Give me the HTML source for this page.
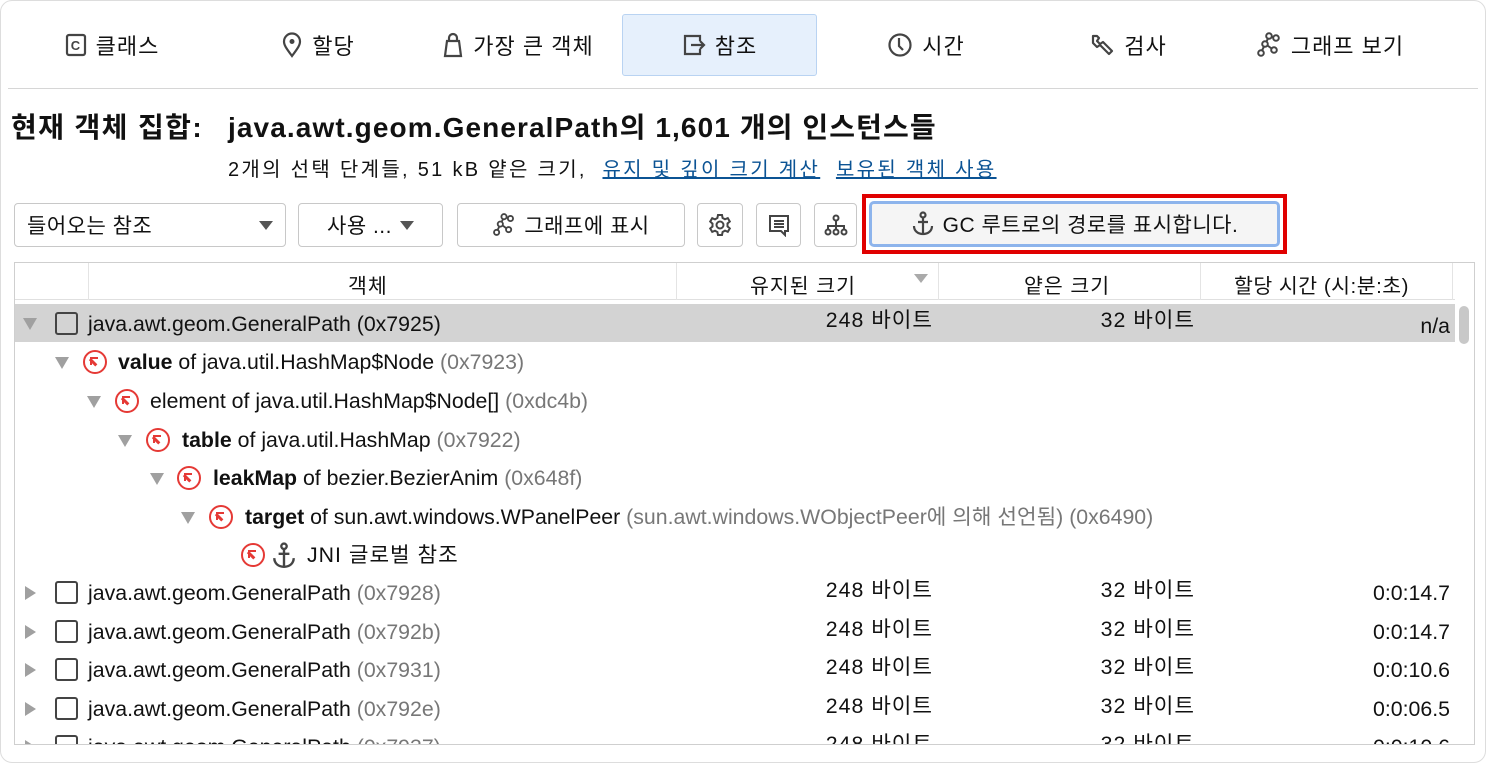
<!DOCTYPE html>
<html><head><meta charset="utf-8"><style>
*{box-sizing:border-box;margin:0;padding:0}
body{width:1486px;height:763px;background:#fff;font-family:"Liberation Sans","Noto Sans CJK KR",sans-serif;color:#111;position:relative;overflow:hidden;font-size:20px}
.a{position:absolute;white-space:nowrap}
.tab{position:absolute;top:14px;height:62px;display:flex;align-items:center;justify-content:center;font-size:22px;gap:9px;letter-spacing:1px}
.btn{position:absolute;top:203px;height:44px;border:1px solid #c8c8c8;border-radius:4px;background:#fff;display:flex;align-items:center;justify-content:center;font-size:21px;gap:8px;letter-spacing:.5px}
.row{position:absolute;left:15px;width:1440px;height:38px;font-size:21.3px}
.c{position:absolute;top:7px;white-space:nowrap;line-height:24px}
.k{letter-spacing:1px}
.g{color:#777}
.tri{position:absolute;width:0;height:0;border-left:7px solid transparent;border-right:7px solid transparent;border-top:12px solid #a0a0a0}
.trr{position:absolute;width:0;height:0;border-top:7px solid transparent;border-bottom:7px solid transparent;border-left:11px solid #a0a0a0}
.cb{position:absolute;width:23px;height:23px;border:2px solid #444;border-radius:3px}
.ri{position:absolute;width:24px;height:24px;border:2.5px solid #e53935;border-radius:50%}
.ri:after{content:"";position:absolute;left:5px;top:5px;width:6px;height:6px;border-left:2.5px solid #e53935;border-top:2.5px solid #e53935}
.ri:before{content:"";position:absolute;left:6px;top:6px;width:9px;height:2.5px;background:#e53935;transform:rotate(45deg);transform-origin:0 0}
</style></head><body>
<div class="a" style="left:0;top:0;width:1486px;height:763px;border:1px solid #ddd;border-radius:12px"></div>

<div class="tab" style="left:14px;width:196px"><svg width="22" height="24" viewBox="0 0 22 24"><rect x="2" y="2" width="18" height="20" rx="2" fill="none" stroke="#444" stroke-width="2.2"/><text x="11" y="17" font-size="13" font-weight="bold" text-anchor="middle" fill="#444" font-family="Liberation Sans">C</text></svg>클래스</div>
<div class="tab" style="left:220px;width:196px"><svg width="22" height="26" viewBox="0 0 22 26"><path d="M11 24C5 16 3 13 3 9.5a8 8 0 0116 0C19 13 17 16 11 24z" fill="none" stroke="#444" stroke-width="2.2"/><circle cx="11" cy="9.5" r="2.5" fill="#444"/></svg>할당</div>
<div class="tab" style="left:420px;width:196px"><svg width="22" height="26" viewBox="0 0 22 26"><path d="M3 24L5 9h12l2 15z M7 9V6a4 4 0 018 0v3" fill="none" stroke="#444" stroke-width="2.2"/></svg>가장 큰 객체</div>
<div class="tab" style="left:622px;width:195px;background:#e6f0fc;border:1px solid #b9d3f2;border-radius:3px"><svg width="24" height="24" viewBox="0 0 24 24"><path d="M14 3H3v18h11M14 3h4v5M18 16v5h-4M9 12h13M18 8l4 4-4 4" fill="none" stroke="#444" stroke-width="2.2"/></svg>참조</div>
<div class="tab" style="left:828px;width:196px"><svg width="26" height="26" viewBox="0 0 26 26"><circle cx="13" cy="13" r="10.5" fill="none" stroke="#444" stroke-width="2.2"/><path d="M12 6v8l4 4" fill="none" stroke="#444" stroke-width="2.2"/></svg>시간</div>
<div class="tab" style="left:1030px;width:196px"><svg width="26" height="26" viewBox="0 0 26 26"><path d="M4 4l4 0 2 2-2 3 3 3 3-2 9 9-3 3-9-9-3 2-4-4z" fill="none" stroke="#444" stroke-width="2.2" stroke-linejoin="round"/></svg>검사</div>
<div class="tab" style="left:1232px;width:196px"><svg width="26" height="26" viewBox="0 0 26 26"><g fill="none" stroke="#444" stroke-width="2"><circle cx="5" cy="21" r="2.8"/><circle cx="9" cy="12" r="2.8"/><circle cx="13" cy="4" r="2.8"/><circle cx="20" cy="6" r="2.8"/><circle cx="18" cy="18" r="2.8"/><path d="M6 18.5l2-4M10.5 9.5l1.5-3M16 5l1.5.5M11.5 13.5l4 3"/></g></svg>그래프 보기</div>
<div class="a" style="left:8px;top:88px;width:1470px;height:1px;background:#d6d6d6"></div>

<div class="a" style="left:11px;top:106px;font-size:28px;font-weight:bold;letter-spacing:1.4px">현재 객체 집합:</div>
<div class="a" style="left:228px;top:106px;font-size:28px;font-weight:bold;letter-spacing:1.1px">java.awt.geom.GeneralPath의 1,601 개의 인스턴스들</div>
<div class="a" style="left:228px;top:153px;font-size:20px;letter-spacing:2.3px">2개의 선택 단계들, 51 kB 얕은 크기, &nbsp;<span style="color:#0b5394;text-decoration:underline">유지 및 깊이 크기 계산</span>&nbsp; <span style="color:#0b5394;text-decoration:underline">보유된 객체 사용</span></div>

<div class="btn" style="left:14px;width:272px;justify-content:space-between;padding:0 12px">들어오는 참조<span style="border-left:7px solid transparent;border-right:7px solid transparent;border-top:9px solid #555"></span></div>
<div class="btn" style="left:298px;width:145px">사용 ... <span style="border-left:7px solid transparent;border-right:7px solid transparent;border-top:9px solid #555"></span></div>
<div class="btn" style="left:457px;width:228px"><svg width="24" height="24" viewBox="0 0 26 26"><g fill="none" stroke="#444" stroke-width="2"><circle cx="5" cy="21" r="2.8"/><circle cx="9" cy="12" r="2.8"/><circle cx="13" cy="4" r="2.8"/><circle cx="20" cy="6" r="2.8"/><circle cx="18" cy="18" r="2.8"/><path d="M6 18.5l2-4M10.5 9.5l1.5-3M16 5l1.5.5M11.5 13.5l4 3"/></g></svg>그래프에 표시</div>
<div class="btn" style="left:697px;width:46px"><svg width="24" height="24" viewBox="0 0 24 24"><circle cx="12" cy="12" r="3.5" fill="none" stroke="#444" stroke-width="2"/><path d="M10 2h4l.6 3 2.4 1.3 2.8-1.2 2 3.4-2.3 2v2.9l2.3 2-2 3.4-2.8-1.2L14.6 19 14 22h-4l-.6-3-2.4-1.3-2.8 1.2-2-3.4 2.3-2v-2.9l-2.3-2 2-3.4 2.8 1.2L9.4 5z" fill="none" stroke="#444" stroke-width="2"/></svg></div>
<div class="btn" style="left:756px;width:45px"><svg width="24" height="24" viewBox="0 0 24 24"><path d="M3 3h18v15h-3v4l-4-4H3z M7 8h10M7 11h10M7 14h10" fill="none" stroke="#444" stroke-width="2"/></svg></div>
<div class="btn" style="left:814px;width:43px"><svg width="24" height="24" viewBox="0 0 24 24"><g fill="none" stroke="#444" stroke-width="2"><circle cx="12" cy="5" r="2.5"/><circle cx="4" cy="19" r="2.5"/><circle cx="12" cy="19" r="2.5"/><circle cx="20" cy="19" r="2.5"/><path d="M12 8v8M4 16v-3h16v3"/></g></svg></div>
<div class="a" style="left:862px;top:194px;width:425px;height:60px;border:4px solid #e00000"></div>
<div class="btn" style="left:869px;top:201px;width:411px;height:46px;background:#f5f5f5;border:3px solid #8db4ec;border-radius:5px"><svg width="24" height="26" viewBox="0 0 24 26"><g fill="none" stroke="#444" stroke-width="2.2"><circle cx="12" cy="4" r="2.5"/><path d="M12 7v16M7 11h10M3 15c0 5 4 8 9 8s9-3 9-8"/></g></svg>GC 루트로의 경로를 표시합니다.</div>

<div class="a" style="left:14px;top:262px;width:1461px;height:483px;border:1px solid #cfcfcf"></div>
<div class="a" style="left:15px;top:263px;width:1440px;height:37px;border-bottom:1px solid #e0e0e0"></div>
<div class="a" style="left:88px;top:263px;width:1px;height:37px;background:#e4e4e4"></div>
<div class="a" style="left:676px;top:263px;width:1px;height:37px;background:#e4e4e4"></div>
<div class="a" style="left:938px;top:263px;width:1px;height:37px;background:#e4e4e4"></div>
<div class="a" style="left:1200px;top:263px;width:1px;height:37px;background:#e4e4e4"></div>
<div class="a" style="left:1452px;top:263px;width:1px;height:37px;background:#e4e4e4"></div>
<div class="a k" style="left:348px;top:269px;font-size:20.5px">객체</div>
<div class="a k" style="left:750px;top:269px;font-size:20.5px">유지된 크기</div>
<div class="a" style="left:914px;top:274px;border-left:7px solid transparent;border-right:7px solid transparent;border-top:9px solid #aaa"></div>
<div class="a k" style="left:1024px;top:269px;font-size:20.5px">얕은 크기</div>
<div class="a" style="left:1234px;top:269px;font-size:20.5px;letter-spacing:.5px">할당 시간 (시:분:초)</div>
<div class="a" style="left:1459px;top:306px;width:10px;height:38px;background:#c8c8c8;border-radius:5px"></div>

<div class="row" style="top:304px;background:#d3d3d3"><div class="tri" style="left:8px;top:14px"></div><div class="cb" style="left:40px;top:8px"></div><div class="c" style="left:73px;top:8px">java.awt.geom.GeneralPath (0x7925)</div><div class="c k" style="right:522px;top:4px">248 바이트</div><div class="c k" style="right:260px;top:4px">32 바이트</div><div class="c" style="right:5px;top:10px">n/a</div></div>

<div class="row" style="top:343px"><div class="tri" style="left:40px;top:14px"></div><div class="ri" style="left:68px;top:7px"></div><div class="c" style="left:103px"><b>value</b> of java.util.HashMap$Node <span class="g">(0x7923)</span></div></div>
<div class="row" style="top:382px"><div class="tri" style="left:72px;top:14px"></div><div class="ri" style="left:100px;top:7px"></div><div class="c" style="left:135px">element of java.util.HashMap$Node[] <span class="g">(0xdc4b)</span></div></div>
<div class="row" style="top:421px"><div class="tri" style="left:103px;top:14px"></div><div class="ri" style="left:131px;top:7px"></div><div class="c" style="left:167px"><b>table</b> of java.util.HashMap <span class="g">(0x7922)</span></div></div>
<div class="row" style="top:459px"><div class="tri" style="left:135px;top:14px"></div><div class="ri" style="left:162px;top:7px"></div><div class="c" style="left:198px"><b>leakMap</b> of bezier.BezierAnim <span class="g">(0x648f)</span></div></div>
<div class="row" style="top:498px"><div class="tri" style="left:166px;top:14px"></div><div class="ri" style="left:194px;top:7px"></div><div class="c" style="left:230px"><b>target</b> of sun.awt.windows.WPanelPeer <span class="g">(sun.awt.windows.WObjectPeer에 의해 선언됨) (0x6490)</span></div></div>
<div class="row" style="top:536px"><div class="ri" style="left:226px;top:7px"></div><svg class="a" style="left:256px;top:6px" width="26" height="28" viewBox="0 0 24 26"><g fill="none" stroke="#444" stroke-width="2.2"><circle cx="12" cy="4" r="2.5"/><path d="M12 7v16M7 11h10M3 15c0 5 4 8 9 8s9-3 9-8"/></g></svg><div class="c k" style="left:292px">JNI 글로벌 참조</div></div>

<div class="row" style="top:574px"><div class="trr" style="left:10px;top:12px"></div><div class="cb" style="left:40px;top:7px"></div><div class="c" style="left:73px">java.awt.geom.GeneralPath <span class="g">(0x7928)</span></div><div class="c k" style="right:522px;top:4px">248 바이트</div><div class="c k" style="right:260px;top:4px">32 바이트</div><div class="c" style="right:5px">0:0:14.7</div></div>
<div class="row" style="top:613px"><div class="trr" style="left:10px;top:12px"></div><div class="cb" style="left:40px;top:7px"></div><div class="c" style="left:73px">java.awt.geom.GeneralPath <span class="g">(0x792b)</span></div><div class="c k" style="right:522px;top:4px">248 바이트</div><div class="c k" style="right:260px;top:4px">32 바이트</div><div class="c" style="right:5px">0:0:14.7</div></div>
<div class="row" style="top:651px"><div class="trr" style="left:10px;top:12px"></div><div class="cb" style="left:40px;top:7px"></div><div class="c" style="left:73px">java.awt.geom.GeneralPath <span class="g">(0x7931)</span></div><div class="c k" style="right:522px;top:4px">248 바이트</div><div class="c k" style="right:260px;top:4px">32 바이트</div><div class="c" style="right:5px">0:0:10.6</div></div>
<div class="row" style="top:690px"><div class="trr" style="left:10px;top:12px"></div><div class="cb" style="left:40px;top:7px"></div><div class="c" style="left:73px">java.awt.geom.GeneralPath <span class="g">(0x792e)</span></div><div class="c k" style="right:522px;top:4px">248 바이트</div><div class="c k" style="right:260px;top:4px">32 바이트</div><div class="c" style="right:5px">0:0:06.5</div></div>
<div class="a" style="left:15px;top:728px;width:1440px;height:16px;overflow:hidden"><div class="row" style="left:0;top:0"><div class="trr" style="left:10px;top:12px"></div><div class="cb" style="left:40px;top:7px"></div><div class="c" style="left:73px">java.awt.geom.GeneralPath <span class="g">(0x7937)</span></div><div class="c k" style="right:522px;top:4px">248 바이트</div><div class="c k" style="right:260px;top:4px">32 바이트</div><div class="c" style="right:5px">0:0:10.6</div></div></div>
</body></html>
